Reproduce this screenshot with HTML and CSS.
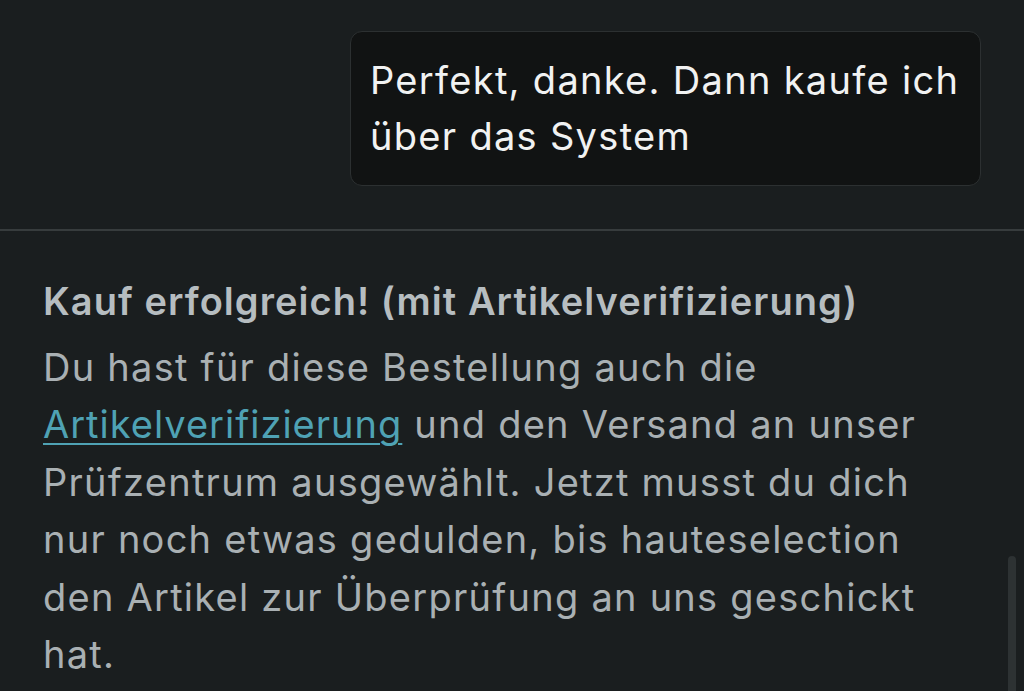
FILE: index.html
```html
<!DOCTYPE html>
<html lang="de">
<head>
<meta charset="utf-8">
<title>Chat</title>
<link rel="stylesheet" href="styles.css">
</head>
<body>
<div class="chat">
  <div class="row-user">
    <div class="bubble">Perfekt, danke. Dann kaufe ich über das System</div>
  </div>
  <hr class="divider">
  <div class="reply">
    <p class="title">Kauf erfolgreich! (mit Artikelverifizierung)</p>
    <p class="body">Du hast für diese Bestellung auch die <a href="#" class="link">Artikelverifizierung</a> und den Versand an unser Prüfzentrum ausgewählt. Jetzt musst du dich nur noch etwas gedulden, bis hauteselection den Artikel zur Überprüfung an uns geschickt hat.</p>
  </div>
</div>
<div class="scrollbar"></div>
</body>
</html>
```
FILE: styles.css
```css
html, body {
  margin: 0;
  padding: 0;
  height: 100%;
  overflow: hidden;
  background: #1a1e1f;
  font-family: Inter, "Noto Sans", sans-serif;
}
.chat {
  display: flex;
  flex-direction: column;
}
.row-user {
  display: flex;
  justify-content: flex-end;
  padding: 31px 43px 0 43px;
}
.bubble {
  width: 631px;
  box-sizing: border-box;
  background: #111313;
  border: 1.5px solid #2c3031;
  border-radius: 12px;
  padding: 20px 8px 21px 19px;
  color: #f1f2f2;
  font-size: 38px;
  line-height: 56px;
  letter-spacing: 1.3px;
}
.divider {
  margin: 43px 0 0 0;
  border: none;
  height: 2px;
  background: #373c3d;
}
.reply {
  padding: 42px 43px 0 43px;
}
.title {
  margin: 0 0 10px 0;
  color: #b6bdc0;
  font-weight: 600;
  font-size: 38px;
  line-height: 56px;
  letter-spacing: 1.05px;
}
.body {
  margin: 0;
  color: #a9b0b3;
  font-size: 38px;
  line-height: 57.4px;
  letter-spacing: 1.25px;
  max-width: 900px;
}
.link {
  color: #4fa2b4;
  letter-spacing: 1px;
  text-decoration: underline;
  text-decoration-thickness: 2px;
  text-underline-offset: 5px;
}
.scrollbar {
  position: fixed;
  right: 8px;
  top: 556px;
  width: 8px;
  height: 140px;
  border-radius: 4px;
  background: #2d3233;
}
```
